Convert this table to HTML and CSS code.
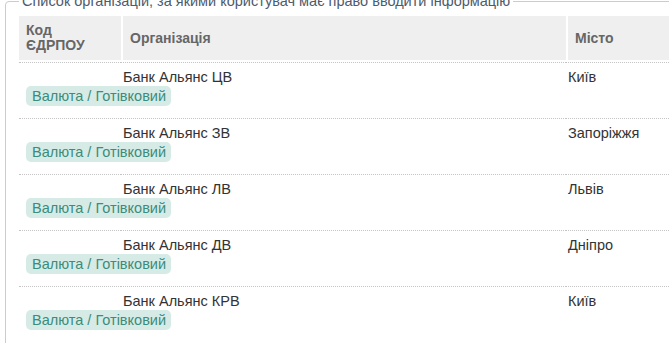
FILE: index.html
```html
<!DOCTYPE html>
<html lang="uk">
<head>
<meta charset="utf-8">
<title>Організації</title>
<link rel="stylesheet" href="styles.css">
</head>
<body>
<fieldset class="box">
  <legend class="box-title">Список організацій, за якими користувач має право вводити інформацію</legend>
  <table class="orgs">
    <colgroup>
      <col class="c-code">
      <col class="c-org">
      <col class="c-city">
    </colgroup>
    <thead>
      <tr>
        <th>Код<br>ЄДРПОУ</th>
        <th class="sep">Організація</th>
        <th class="sep">Місто</th>
      </tr>
    </thead>
    <tbody>
      <tr>
        <td class="code"><div class="code-val"></div><span class="badge">Валюта / Готівковий</span></td>
        <td class="txt">Банк Альянс ЦВ</td>
        <td class="txt">Київ</td>
      </tr>
      <tr>
        <td class="code"><div class="code-val"></div><span class="badge">Валюта / Готівковий</span></td>
        <td class="txt">Банк Альянс ЗВ</td>
        <td class="txt">Запоріжжя</td>
      </tr>
      <tr>
        <td class="code"><div class="code-val"></div><span class="badge">Валюта / Готівковий</span></td>
        <td class="txt">Банк Альянс ЛВ</td>
        <td class="txt">Львів</td>
      </tr>
      <tr>
        <td class="code"><div class="code-val"></div><span class="badge">Валюта / Готівковий</span></td>
        <td class="txt">Банк Альянс ДВ</td>
        <td class="txt">Дніпро</td>
      </tr>
      <tr>
        <td class="code"><div class="code-val"></div><span class="badge">Валюта / Готівковий</span></td>
        <td class="txt">Банк Альянс КРВ</td>
        <td class="txt">Київ</td>
      </tr>
    </tbody>
  </table>
</fieldset>
</body>
</html>
```
FILE: styles.css
```css
html, body {
  margin: 0;
  padding: 0;
  background: #fff;
  overflow: hidden;
}
body {
  font-family: "Liberation Sans", Arial, sans-serif;
  font-size: 14.5px;
  color: #333;
}
.box {
  margin: -7px 0 0 5px;
  width: 760px;
  padding: 7px 0 20px 13px;
  border: 1px solid #ccc;
  border-radius: 4px;
  min-height: 360px;
  box-sizing: border-box;
}
.box-title {
  padding: 0 3px;
  font-size: 14.5px;
  line-height: 16px;
  color: #4d5b6b;
}
.orgs {
  border-collapse: separate;
  border-spacing: 0;
  table-layout: fixed;
  width: 700px;
}
.c-code { width: 102px; }
.c-org { width: 445px; }
.c-city { width: 153px; }
.orgs th {
  background: #efefef;
  background-clip: padding-box;
  color: #666;
  font-weight: bold;
  font-size: 14px;
  line-height: 15px;
  text-align: left;
  vertical-align: middle;
  padding: 0 7px;
  border-bottom: 2px solid #fff;
  box-sizing: border-box;
  height: 46px;
}
.orgs th.sep {
  border-left: 2px solid #fff;
}
.orgs td {
  border-top: 1px dotted #c4c4c4;
  vertical-align: top;
  padding: 5px 0 12px 2px;
  line-height: 18px;
}
.orgs td.code {
  padding-left: 7px;
  white-space: nowrap;
}
.code-val {
  height: 18px;
}
.badge {
  display: inline-block;
  background: #d6ebe6;
  color: #3b8c7d;
  line-height: 20px;
  padding: 0 5px 0 6px;
  border-radius: 5px;
}
```
